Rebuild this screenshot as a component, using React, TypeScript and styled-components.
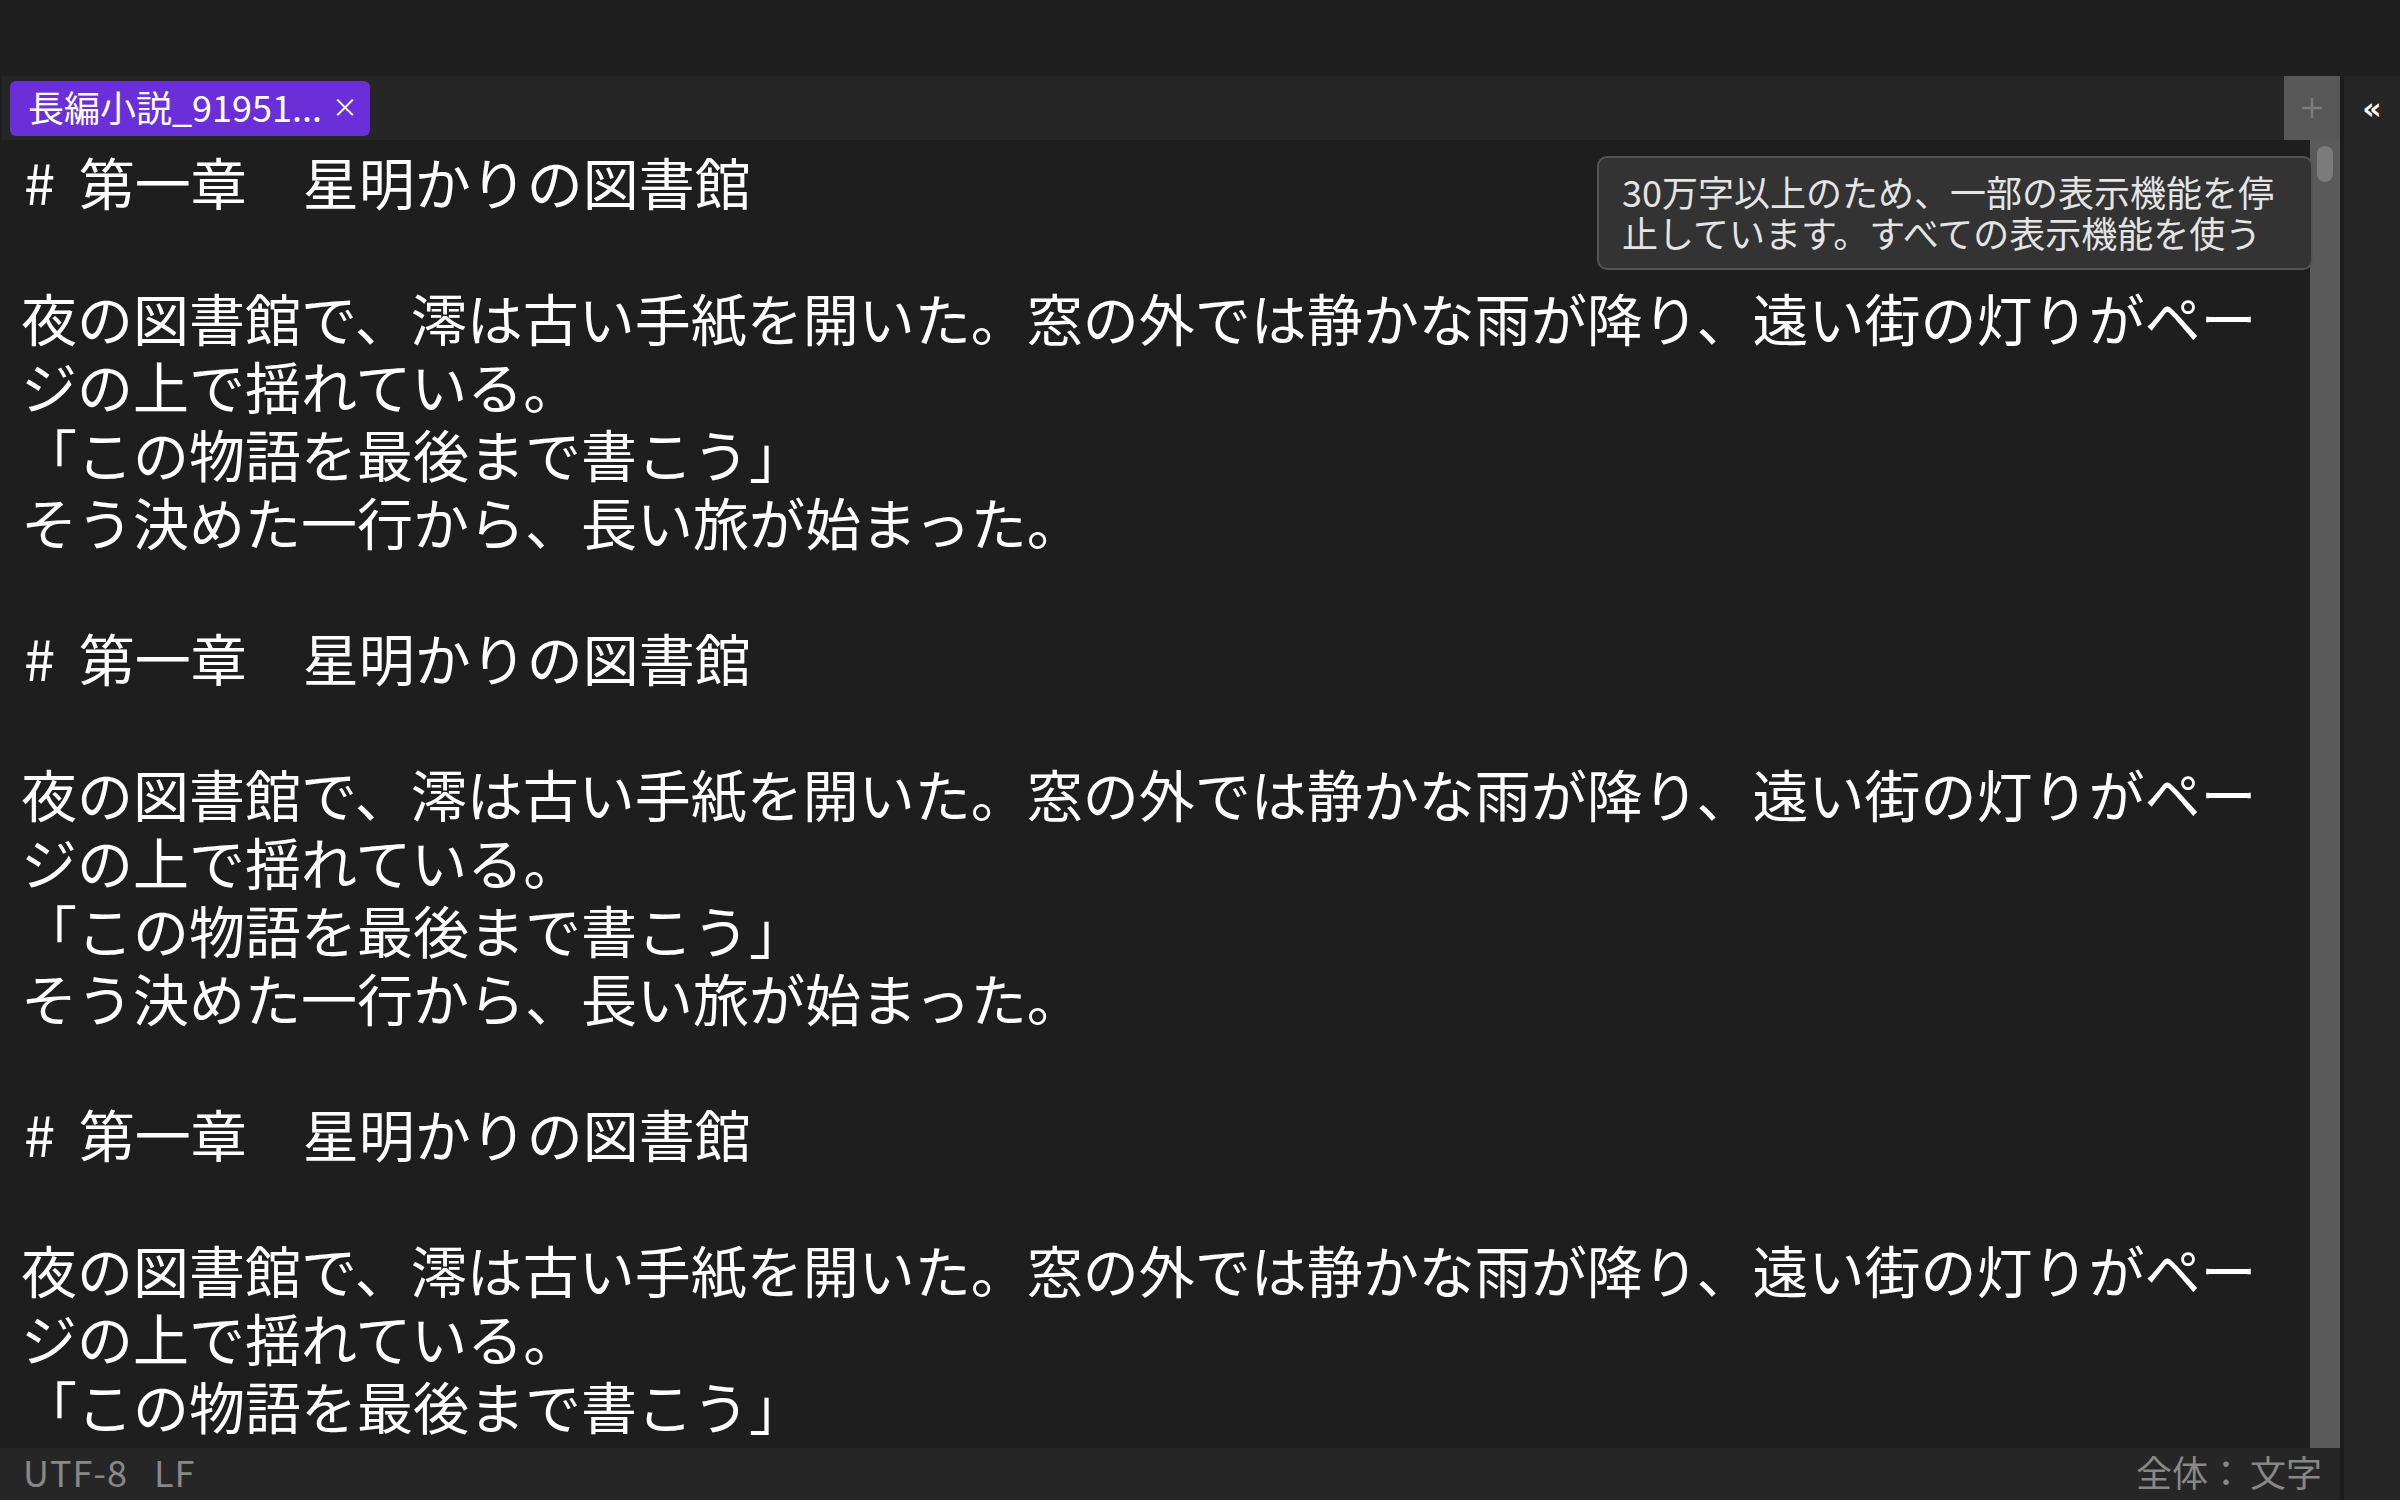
import React from 'react';
import styled, { createGlobalStyle } from 'styled-components';

const GlobalStyle = createGlobalStyle`
  html, body {
    margin: 0;
    padding: 0;
    background: #1e1e1e;
  }
  body {
    font-family: "Noto Sans CJK JP", "Noto Sans", sans-serif;
  }
  * {
    box-sizing: border-box;
  }
`;

const Shell = styled.div`
  width: 2400px;
  height: 1500px;
  display: flex;
  flex-direction: column;
  overflow: hidden;
  background: #1e1e1e;
`;

const TitleBar = styled.div`
  height: 76px;
  flex-shrink: 0;
  background: #1f1f1f;
`;

const Workspace = styled.div`
  flex: 1;
  min-height: 0;
  display: flex;
`;

const Main = styled.div`
  flex: 1;
  min-width: 0;
  display: flex;
  flex-direction: column;
`;

const TabBar = styled.div`
  height: 64px;
  flex-shrink: 0;
  display: flex;
  align-items: center;
  margin-left: 2px;
  padding-left: 8px;
  background: #262626;
`;

const Tab = styled.div`
  height: 55px;
  width: 360px;
  display: flex;
  align-items: center;
  justify-content: space-between;
  padding: 0 12px 4px 18px;
  border-radius: 6px;
  background: #6a2fd9;
  color: #ffffff;
  font-size: 36px;
  line-height: 40px;
`;

const TabClose = styled.span`
  font-size: 26px;
  line-height: 1;
`;

const Spacer = styled.div`
  flex: 1;
`;

const AddButton = styled.div`
  width: 56px;
  height: 64px;
  display: flex;
  align-items: center;
  justify-content: center;
  background: #575757;
`;

const Editor = styled.div`
  flex: 1;
  min-height: 0;
  display: flex;
  position: relative;
  background: #1e1e1e;
`;

const Content = styled.div`
  flex: 1;
  min-width: 0;
  overflow: hidden;
  padding: 7px 30px 0 21px;
  color: #ffffff;
  font-size: 56px;
  line-height: 68px;
`;

const Line = styled.div`
  min-height: 68px;
  white-space: pre-wrap;
`;

const Hash = styled.span`
  display: inline-block;
  padding-left: 3px;
  margin-right: 11px;
`;

const Scrollbar = styled.div`
  width: 30px;
  flex-shrink: 0;
  display: flex;
  justify-content: center;
  padding-top: 6px;
  background: #5a5a5a;
`;

const Thumb = styled.div`
  width: 16px;
  height: 36px;
  border-radius: 8px;
  background: #7b7b7b;
`;

const Notice = styled.div`
  position: absolute;
  top: 16px;
  right: 27px;
  width: 716px;
  height: 114px;
  padding: 13px 23px;
  border: 2px solid #545454;
  border-radius: 10px;
  background: #333333;
  color: #e4e4e4;
  font-size: 36px;
  line-height: 41px;
  overflow: hidden;
`;

const NoticeLine = styled.div`
  white-space: nowrap;
`;

const StatusBar = styled.div`
  height: 52px;
  flex-shrink: 0;
  display: flex;
  align-items: center;
  justify-content: space-between;
  padding: 0 18px 6px 23px;
  background: #262626;
  color: #888888;
  font-size: 36px;
  line-height: 40px;
`;

const StatusGroup = styled.div<{ $gap: number }>`
  display: flex;
  align-items: center;
  gap: ${(p) => p.$gap}px;
`;

const Encoding = styled.span`
  letter-spacing: 1px;
`;

const Divider = styled.div`
  width: 4px;
  flex-shrink: 0;
  background: #1c1c1c;
`;

const SidePanel = styled.div`
  width: 56px;
  flex-shrink: 0;
  display: flex;
  flex-direction: column;
  align-items: center;
  padding-top: 16px;
  background: #262626;
`;

const Collapse = styled.span`
  color: #ffffff;
  font-family: "DejaVu Sans", sans-serif;
  font-weight: bold;
  font-size: 30px;
  line-height: 34px;
`;

const body = [
  '',
  '夜の図書館で、澪は古い手紙を開いた。窓の外では静かな雨が降り、遠い街の灯りがページの上で揺れている。',
  '「この物語を最後まで書こう」',
  'そう決めた一行から、長い旅が始まった。',
  '',
];

const chapters = [0, 1, 2, 3];

const PlusIcon = () => (
  <svg width="24" height="24" viewBox="0 0 24 24">
    <path d="M12 2v20M2 12h20" stroke="#7c7c7c" strokeWidth="2.5" />
  </svg>
);

const App = () => (
  <>
    <GlobalStyle />
    <Shell>
      <TitleBar />
      <Workspace>
        <Main>
          <TabBar>
            <Tab>
              <span>長編小説_91951...</span>
              <TabClose>×</TabClose>
            </Tab>
            <Spacer />
            <AddButton>
              <PlusIcon />
            </AddButton>
          </TabBar>
          <Editor>
            <Content>
              {chapters.map((c) => (
                <React.Fragment key={c}>
                  <Line>
                    <Hash>#</Hash> 第一章　星明かりの図書館
                  </Line>
                  {body.map((text, i) => (
                    <Line key={i}>{text}</Line>
                  ))}
                </React.Fragment>
              ))}
            </Content>
            <Scrollbar>
              <Thumb />
            </Scrollbar>
            <Notice>
              <NoticeLine>30万字以上のため、一部の表示機能を停</NoticeLine>
              <NoticeLine>止しています。すべての表示機能を使う</NoticeLine>
            </Notice>
          </Editor>
          <StatusBar>
            <StatusGroup $gap={26}>
              <Encoding>UTF-8</Encoding>
              <Encoding>LF</Encoding>
            </StatusGroup>
            <StatusGroup $gap={6}>
              <span>全体：</span>
              <span>文字</span>
            </StatusGroup>
          </StatusBar>
        </Main>
        <Divider />
        <SidePanel>
          <Collapse>«</Collapse>
        </SidePanel>
      </Workspace>
    </Shell>
  </>
);

export default App;
